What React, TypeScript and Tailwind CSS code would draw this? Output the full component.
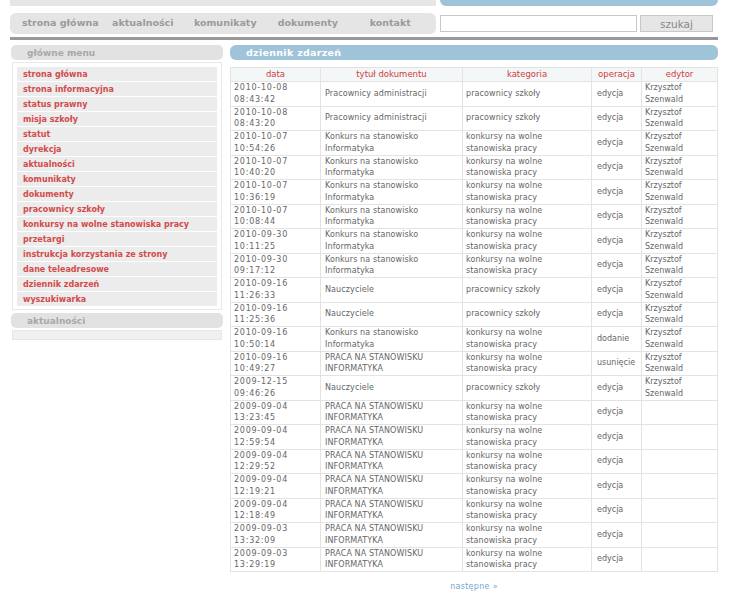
const NAV = ['strona główna', 'aktualności', 'komunikaty', 'dokumenty', 'kontakt']

const MENU = [
  'strona główna',
  'strona informacyjna',
  'status prawny',
  'misja szkoły',
  'statut',
  'dyrekcja',
  'aktualności',
  'komunikaty',
  'dokumenty',
  'pracownicy szkoły',
  'konkursy na wolne stanowiska pracy',
  'przetargi',
  'instrukcja korzystania ze strony',
  'dane teleadresowe',
  'dziennik zdarzeń',
  'wyszukiwarka',
]

const KS = 'Krzysztof Szenwald'
const KONK = 'Konkurs na stanowisko Informatyka'
const PRACA = 'PRACA NA STANOWISKU INFORMATYKA'
const KW = 'konkursy na wolne stanowiska pracy'
const PS = 'pracownicy szkoły'

const ROWS: [string, string, string, string, string, string][] = [
  ['2010-10-08', '08:43:42', 'Pracownicy administracji', PS, 'edycja', KS],
  ['2010-10-08', '08:43:20', 'Pracownicy administracji', PS, 'edycja', KS],
  ['2010-10-07', '10:54:26', KONK, KW, 'edycja', KS],
  ['2010-10-07', '10:40:20', KONK, KW, 'edycja', KS],
  ['2010-10-07', '10:36:19', KONK, KW, 'edycja', KS],
  ['2010-10-07', '10:08:44', KONK, KW, 'edycja', KS],
  ['2010-09-30', '10:11:25', KONK, KW, 'edycja', KS],
  ['2010-09-30', '09:17:12', KONK, KW, 'edycja', KS],
  ['2010-09-16', '11:26:33', 'Nauczyciele', PS, 'edycja', KS],
  ['2010-09-16', '11:25:36', 'Nauczyciele', PS, 'edycja', KS],
  ['2010-09-16', '10:50:14', KONK, KW, 'dodanie', KS],
  ['2010-09-16', '10:49:27', PRACA, KW, 'usunięcie', KS],
  ['2009-12-15', '09:46:26', 'Nauczyciele', PS, 'edycja', KS],
  ['2009-09-04', '13:23:45', PRACA, KW, 'edycja', ''],
  ['2009-09-04', '12:59:54', PRACA, KW, 'edycja', ''],
  ['2009-09-04', '12:29:52', PRACA, KW, 'edycja', ''],
  ['2009-09-04', '12:19:21', PRACA, KW, 'edycja', ''],
  ['2009-09-04', '12:18:49', PRACA, KW, 'edycja', ''],
  ['2009-09-03', '13:32:09', PRACA, KW, 'edycja', ''],
  ['2009-09-03', '13:29:19', PRACA, KW, 'edycja', ''],
]

export default function App() {
  return (
    <div className="w-[732px] h-[600px] bg-white font-['DejaVu_Sans',Verdana,sans-serif] overflow-hidden">
      <div className="ml-[10px] w-[708px]">
        {/* top strip */}
        <div className="flex gap-[4px] h-[6px]">
          <div className="w-[426px] bg-[#e6e6e6]" />
          <div className="flex-1 bg-[#9fc3d8] rounded-b-[6px]" />
        </div>

        {/* nav + search */}
        <div className="flex items-center mt-[7px] h-[21px]">
          <div className="w-[426px] h-[21px] bg-[#e5e5e5] rounded-[6px] flex items-center pl-[9px]">
            {NAV.map((n) => (
              <span key={n} className="w-[82.5px] text-center text-[9.5px] font-bold text-[#9a9a9a]">
                {n}
              </span>
            ))}
          </div>
          <input
            type="text"
            className="ml-[4px] w-[197px] h-[17px] border border-[#c8c8c8] bg-white outline-none"
          />
          <button className="ml-[3px] w-[73px] h-[17px] bg-[#e6e6e6] border border-[#c8c8c8] text-[10.5px] text-[#888] font-['DejaVu_Sans',sans-serif] pt-[1px] leading-none">
            szukaj
          </button>
        </div>

        <div className="mt-[3px] h-[3px] bg-[#999999]" />

        <div className="flex mt-[5px]">
          {/* sidebar */}
          <div className="w-[212px] ml-[1px]">
            <div className="h-[15px] bg-[#e2e2e2] rounded-[5px] pl-[16px] text-[9px] font-bold text-[#a8a8a8] leading-[16px]">
              główne menu
            </div>
            <div className="mt-[2px] mx-[1px] border border-[#e8e8e8] px-[4px] pt-[4px] pb-[2px]">
              {MENU.map((m) => (
                <div
                  key={m}
                  className="h-[14px] mb-[1px] bg-[#ececec] pl-[6px] text-[8px] font-bold text-[#d24b4b] leading-[16px] overflow-hidden whitespace-nowrap"
                >
                  {m}
                </div>
              ))}
            </div>
            <div className="mt-[3px] h-[15px] bg-[#e2e2e2] rounded-[5px] pl-[16px] text-[9px] font-bold text-[#a8a8a8] leading-[16px]">
              aktualności
            </div>
            <div className="mt-[2px] mx-[1px] h-[10px] border border-[#e6e6e6] bg-[#f0f0f0]" />
          </div>

          {/* content */}
          <div className="ml-[7px] flex-1">
            <div className="h-[15px] bg-[#9fc3d8] rounded-[6px] pl-[16px] text-[9.5px] font-bold text-white leading-[15px] tracking-[0.3px]">
              dziennik zdarzeń
            </div>
            <table className="mt-[7px] w-[487px] table-fixed border-collapse text-[8px] text-[#666]">
              <colgroup>
                <col className="w-[90px]" />
                <col className="w-[142px]" />
                <col className="w-[129px]" />
                <col className="w-[50px]" />
                <col className="w-[76px]" />
              </colgroup>
              <thead>
                <tr className="bg-[#f4f7f8] h-[14px]">
                  {['data', 'tytuł dokumentu', 'kategoria', 'operacja', 'edytor'].map((h) => (
                    <th
                      key={h}
                      className="border border-[#e3e3e3] text-[8.5px] font-normal text-[#d03c3c] text-center leading-[13px] p-0"
                    >
                      {h}
                    </th>
                  ))}
                </tr>
              </thead>
              <tbody>
                {ROWS.map((r, i) => (
                  <tr key={i}>
                    <td className="border border-[#e3e3e3] pl-[3px] py-0 leading-[11.75px] tracking-[0.75px] align-middle">
                      {r[0]}
                      <br />
                      {r[1]}
                    </td>
                    <td className="border border-[#e3e3e3] pl-[4px] pr-[2px] py-0 leading-[11.75px] tracking-[0.1px] align-middle">
                      {r[2]}
                    </td>
                    <td className="border border-[#e3e3e3] pl-[3px] pr-[2px] py-0 leading-[11.75px] tracking-[0.1px] align-middle">
                      {r[3]}
                    </td>
                    <td className="border border-[#e3e3e3] pl-[5px] py-0 leading-[11.75px] align-middle whitespace-nowrap">
                      {r[4]}
                    </td>
                    <td className="border border-[#e3e3e3] pl-[3px] pr-[2px] py-0 leading-[11.75px] align-middle">
                      {r[5]}
                    </td>
                  </tr>
                ))}
              </tbody>
            </table>
            <div className="mt-[9px] text-center text-[8px] text-[#72aacb] tracking-[0.3px]">
              następne »
            </div>
          </div>
        </div>
      </div>
    </div>
  )
}
